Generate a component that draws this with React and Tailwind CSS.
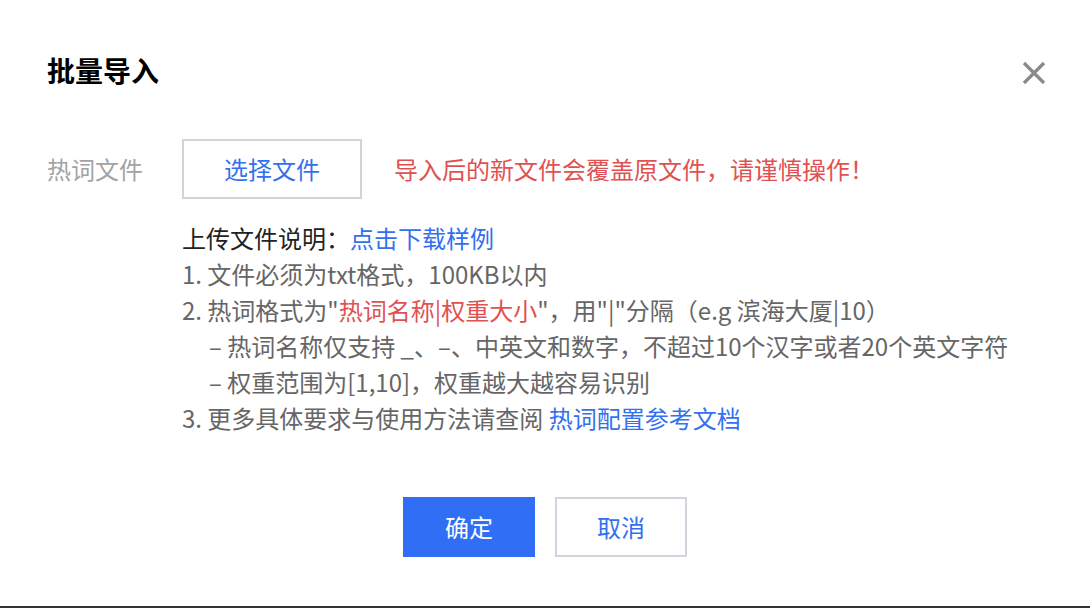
export default function App() {
  const font = { fontFamily: '"Noto Sans CJK SC", "Noto Sans", sans-serif' };
  return (
    <div
      className="w-[1090px] h-[608px] bg-white border-b-2 border-[#333333] flex flex-col pt-[50px] pl-[47px] pr-[44px] box-border"
      style={font}
    >
      <div className="flex items-center justify-between h-[40px]">
        <h1 className="text-[28px] leading-[40px] font-bold text-black">批量导入</h1>
        <svg width="24" height="24" viewBox="0 0 24 24" className="mt-[6px]">
          <path d="M2 2 L22 22 M22 2 L2 22" stroke="#8a8a8a" strokeWidth="3.2" strokeLinecap="butt" fill="none" />
        </svg>
      </div>

      <div className="flex items-center mt-[49px] h-[60px]">
        <div className="w-[135px] text-[24px] leading-[36px] text-[#a3a3a3]">热词文件</div>
        <button className="w-[180px] h-[60px] border-2 border-[#cfd4dd] bg-white text-[24px] text-[#3370f0] flex items-center justify-center">
          选择文件
        </button>
        <div className="ml-[32px] text-[24px] leading-[36px] text-[#e05252]">
          导入后的新文件会覆盖原文件，请谨慎操作！
        </div>
      </div>

      <div className="ml-[135px] mt-[21px] flex flex-col text-[24px] leading-[36px] text-[#666666]">
        <div className="text-[#222222]">
          上传文件说明：<span className="text-[#3370f0]">点击下载样例</span>
        </div>
        <div>1. 文件必须为txt格式，100KB以内</div>
        <div>
          2. 热词格式为"<span className="text-[#e05252]">热词名称|权重大小</span>"，用"|"分隔（e.g 滨海大厦|10）
        </div>
        <div className="pl-[27px]">– 热词名称仅支持 _、–、中英文和数字，不超过10个汉字或者20个英文字符</div>
        <div className="pl-[27px]">– 权重范围为[1,10]，权重越大越容易识别</div>
        <div>
          3. 更多具体要求与使用方法请查阅 <span className="text-[#3370f0]">热词配置参考文档</span>
        </div>
      </div>

      <div className="flex justify-center gap-[20px] mt-[61px] -ml-[47px] -mr-[44px]">
        <button className="w-[132px] h-[60px] bg-[#306ff5] text-white text-[24px] flex items-center justify-center">
          确定
        </button>
        <button className="w-[132px] h-[60px] border-2 border-[#cfd4dd] bg-white text-[#3370f0] text-[24px] flex items-center justify-center">
          取消
        </button>
      </div>
    </div>
  );
}
